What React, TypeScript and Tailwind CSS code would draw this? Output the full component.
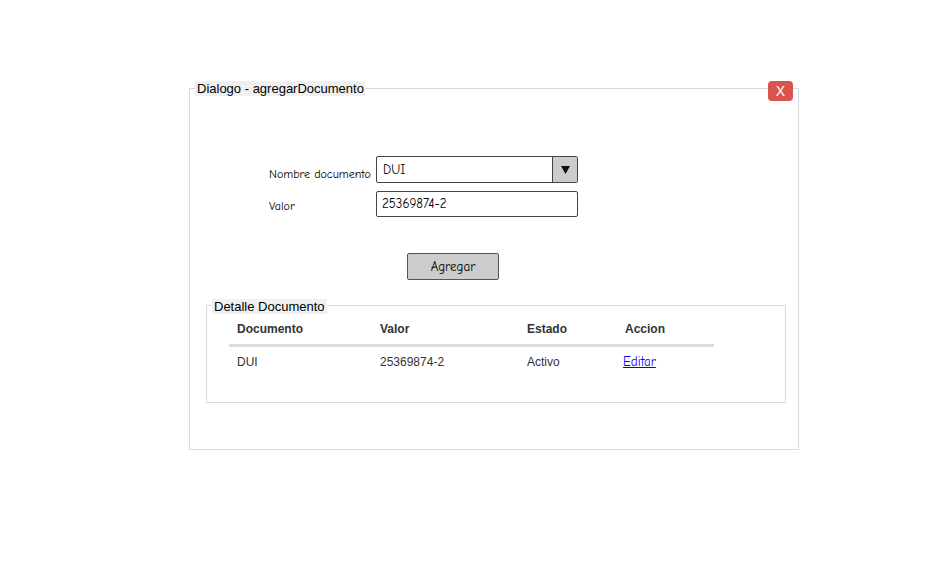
import React from "react";

const comic = { fontFamily: '"Comic Sans MS", "Comic Neue", Lato, "DejaVu Sans", sans-serif' };
const arial = { fontFamily: '"Liberation Sans", Arial, sans-serif' };

export default function App() {
  return (
    <div className="w-[949px] h-[575px] bg-white overflow-hidden pt-[88px] pl-[189px]">
      <div className="relative w-[610px] h-[362px] border border-[#dadada] flex flex-col">
        <div
          className="absolute left-[5px] top-[-8px] bg-[#f0f0f0] pl-[2px] pr-[1px] text-[13px] leading-[15px] text-black"
          style={arial}
        >
          Dialogo - agregarDocumento
        </div>
        <div
          className="absolute left-[578px] top-[-8px] w-[25px] h-[20px] bg-[#d9534f] rounded-[4px] flex items-center justify-center text-white text-[14px] leading-none"
          style={arial}
        >
          X
        </div>

        <div className="flex flex-col pt-[67px] pl-[79px]">
          <div className="flex items-end h-[27px]">
            <div className="w-[107px] text-[12px] leading-[15px] text-black pb-[1px]" style={comic}>
              Nombre documento
            </div>
            <div className="w-[202px] h-[27px] border border-[#444] rounded-[2px] flex bg-white">
              <div className="flex-1 pl-[6px] flex items-center text-[13px] text-black" style={comic}>
                DUI
              </div>
              <div className="w-[25px] h-full bg-[#cccccc] border-l border-[#444] flex items-center justify-center">
                <svg width="9" height="8" viewBox="0 0 9 8">
                  <path d="M0 0 H9 L4.5 8 Z" fill="#111" />
                </svg>
              </div>
            </div>
          </div>
          <div className="flex items-center h-[26px] mt-[8px]">
            <div className="w-[107px] text-[12px] leading-[15px] text-black pt-[4px]" style={comic}>
              Valor
            </div>
            <div className="w-[202px] h-[26px] border border-[#444] rounded-[2px] bg-white pl-[5px] flex items-center text-[13px] text-black" style={comic}>
              25369874-2
            </div>
          </div>
          <div className="mt-[36px] ml-[138px] w-[92px] h-[27px] bg-[#cccccc] border border-[#555] rounded-[2px] flex items-center justify-center text-[13px] text-black" style={comic}>
            Agregar
          </div>
        </div>

        <div className="relative ml-[16px] mt-[25px] w-[580px] h-[98px] border border-[#dadada]">
          <div
            className="absolute left-[5px] top-[-7px] bg-[#f0f0f0] pl-[2px] pr-[2px] text-[13px] leading-[15px] text-black"
            style={arial}
          >
            Detalle Documento
          </div>
          <div className="ml-[22px] mt-[10px] w-[485px] text-[12px] leading-[14px] text-[#333]" style={arial}>
            <div className="flex pt-[6px] pb-[8px] font-bold border-b-[3px] border-[#dddddd]">
              <div className="w-[151px] pl-[8px]">Documento</div>
              <div className="w-[147px]">Valor</div>
              <div className="w-[98px]">Estado</div>
              <div className="flex-1">Accion</div>
            </div>
            <div className="flex h-[30px] items-center">
              <div className="w-[151px] pl-[8px]">DUI</div>
              <div className="w-[147px]">25369874-2</div>
              <div className="w-[96px]">Activo</div>
              <div className="flex-1 text-[#0000ff] underline text-[13px] leading-[16px]" style={comic}>
                Editar
              </div>
            </div>
          </div>
        </div>
      </div>
    </div>
  );
}
